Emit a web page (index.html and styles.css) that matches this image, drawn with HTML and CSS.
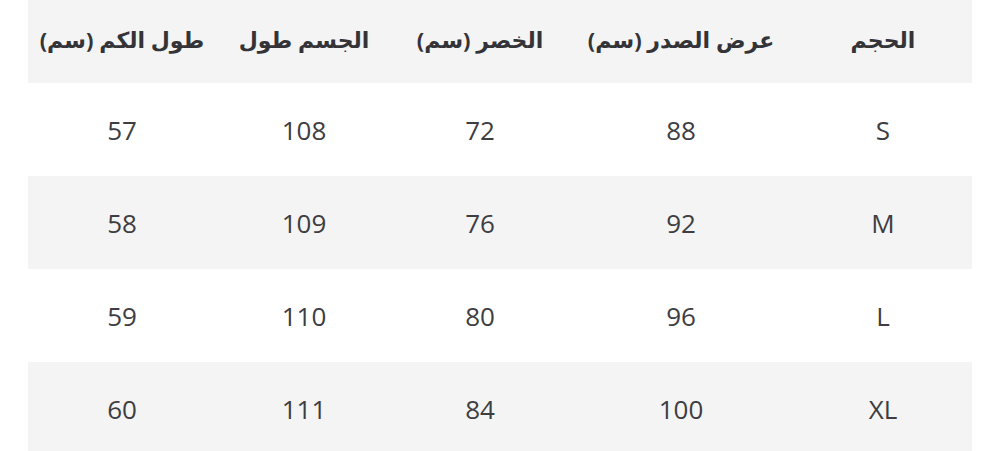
FILE: index.html
```html
<!DOCTYPE html>
<html lang="ar" dir="rtl">
<head>
<meta charset="utf-8">
<link rel="stylesheet" href="styles.css">
</head>
<body>
<div class="wrap">
<table class="sizes">
  <colgroup>
    <col class="c1"><col class="c2"><col class="c3"><col class="c4"><col class="c5">
  </colgroup>
  <thead>
    <tr><th>الحجم</th><th>عرض الصدر (سم)</th><th>الخصر (سم)</th><th>الجسم طول</th><th>طول الكم (سم)</th></tr>
  </thead>
  <tbody>
    <tr><td>S</td><td>88</td><td>72</td><td>108</td><td>57</td></tr>
    <tr class="alt"><td>M</td><td>92</td><td>76</td><td>109</td><td>58</td></tr>
    <tr><td>L</td><td>96</td><td>80</td><td>110</td><td>59</td></tr>
    <tr class="alt"><td>XL</td><td>100</td><td>84</td><td>111</td><td>60</td></tr>
  </tbody>
</table>
</div>
</body>
</html>
```
FILE: styles.css
```css
html, body { margin: 0; padding: 0; background: #fff; }
.wrap { padding: 0 28px; }
.sizes {
  width: 944px;
  border-collapse: collapse;
  table-layout: fixed;
  font-family: "Open Sans", "DejaVu Sans", sans-serif;
  color: #3d3d42;
}
.c1 { width: 178px; }
.c2 { width: 226px; }
.c3 { width: 176px; }
.c4 { width: 176px; }
.c5 { width: 188px; }
.sizes th {
  height: 83px;
  box-sizing: border-box;
  background: #f4f4f4;
  font-weight: 700;
  font-size: 22px;
  color: #333338;
  text-align: center;
  padding: 0 0 6px;
  vertical-align: middle;
}
.sizes td {
  height: 93px;
  font-size: 26px;
  text-align: center;
  padding: 0;
  vertical-align: middle;
}
.sizes tr.alt td { background: #f4f4f4; }
```
